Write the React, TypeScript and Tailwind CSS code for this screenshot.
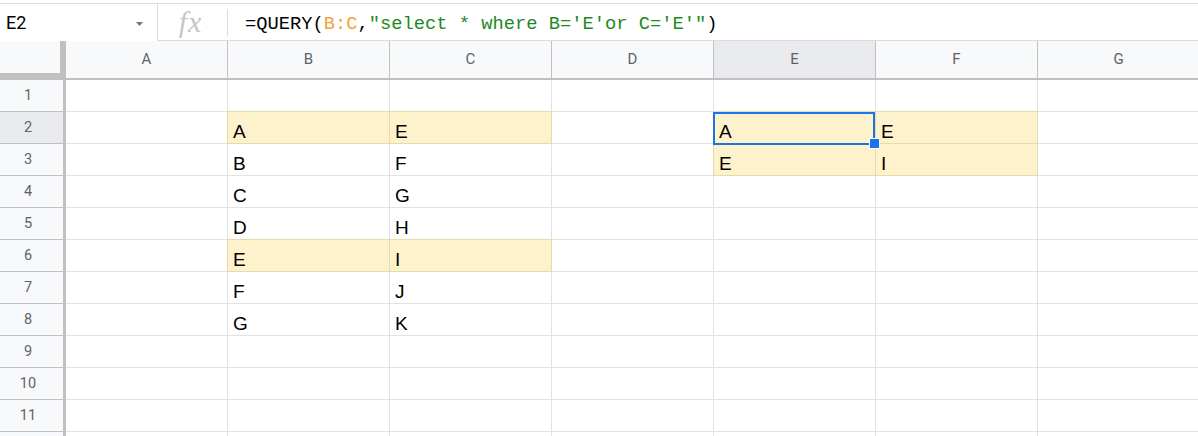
import React from "react";

const COLS = ["A", "B", "C", "D", "E", "F", "G"];
const ROWS = [1, 2, 3, 4, 5, 6, 7, 8, 9, 10, 11, 12];

const DATA: Record<string, string> = {
  B2: "A", C2: "E",
  B3: "B", C3: "F",
  B4: "C", C4: "G",
  B5: "D", C5: "H",
  B6: "E", C6: "I",
  B7: "F", C7: "J",
  B8: "G", C8: "K",
  E2: "A", F2: "E",
  E3: "E", F3: "I",
};

const HL = new Set(["B2", "C2", "B6", "C6", "E2", "F2", "E3", "F3"]);

function Cell({ id }: { id: string }) {
  const hl = HL.has(id);
  const sel = id === "E2";
  return (
    <div
      className={`relative w-[162px] shrink-0 h-full border-r border-b border-[#e2e2e2] ${hl ? "bg-[#fef2cc]" : "bg-white"}`}
    >
      {hl && (
        <div className="absolute -inset-px border border-[#e6d9ac] pointer-events-none z-10" />
      )}
      <div className="pl-[5px] pt-[9px] text-[19px] leading-[21px] text-black font-['Liberation_Sans',Arial,sans-serif]">
        {DATA[id] ?? ""}
      </div>
      {sel && (
        <>
          <div className="absolute left-[-1px] top-0 w-[162px] h-[33px] border-2 border-[#1a73e8] z-20 pointer-events-none" />
          <div className="absolute left-[155px] top-[26px] w-[11px] h-[11px] bg-[#1a73e8] border border-white z-30" />
        </>
      )}
    </div>
  );
}

export default function App() {
  return (
    <div className="w-[1198px] h-[436px] overflow-hidden bg-white relative font-['Roboto',sans-serif]">
      <div className="h-[3px]" />
      {/* Formula bar */}
      <div className="flex h-[38px] border-t border-[#dadce0]">
        <div className="w-[157px] shrink-0 h-full flex items-center justify-between pl-[6px] pr-[14px]">
          <span className="text-[18px] text-black leading-none mt-[1px]">E2</span>
          <svg width="7" height="4" viewBox="0 0 7 4" className="mt-[2px]">
            <path d="M0 0 L7 0 L3.5 4 Z" fill="#777" />
          </svg>
        </div>
        <div className="flex-1 h-full flex items-center border-l border-b border-[#dadce0]">
          <div className="w-[69px] shrink-0 flex items-center justify-center">
            <span className="font-['Liberation_Serif',serif] italic text-[30px] leading-none text-[#c6c6c6] tracking-[1px] mr-[4px]">
              fx
            </span>
          </div>
          <div className="w-px h-[27px] bg-[#dadce0]" />
          <div className="pl-[17px] font-['Liberation_Mono',monospace] text-[18.75px] leading-none whitespace-pre mt-[4px]">
            <span className="text-black">=QUERY(</span>
            <span className="text-[#f4a23a]">B:C</span>
            <span className="text-black">,</span>
            <span className="text-[#1e8a1e]">"select * where B='E'or C='E'"</span>
            <span className="text-black">)</span>
          </div>
        </div>
      </div>
      {/* Column headers */}
      <div className="flex h-[39px]">
        <div className="w-[66px] shrink-0 h-full bg-[#f8f9fa] border-r-[6px] border-b-[7px] border-[#c0c0c0]" />
        {COLS.map((c) => (
          <div
            key={c}
            className={`w-[162px] shrink-0 h-full flex items-center justify-center border-r border-b-2 border-[#c0c0c0] text-[15px] text-[#5f6368] ${c === "E" ? "bg-[#e8eaed]" : "bg-[#f8f9fa]"}`}
          >
            <span className="mb-[1px]">{c}</span>
          </div>
        ))}
      </div>
      {/* Rows */}
      {ROWS.map((r) => (
        <div key={r} className="flex h-[32px]">
          <div
            className={`w-[66px] shrink-0 h-full flex items-center justify-center pr-[7px] border-r-[3px] border-b border-[#c0c0c0] text-[14.5px] text-[#5f6368] ${r === 2 ? "bg-[#e8eaed]" : "bg-[#f8f9fa]"}`}
          >
            {r <= 11 ? r : ""}
          </div>
          {COLS.map((c) => (
            <Cell key={c} id={`${c}${r}`} />
          ))}
        </div>
      ))}
    </div>
  );
}
